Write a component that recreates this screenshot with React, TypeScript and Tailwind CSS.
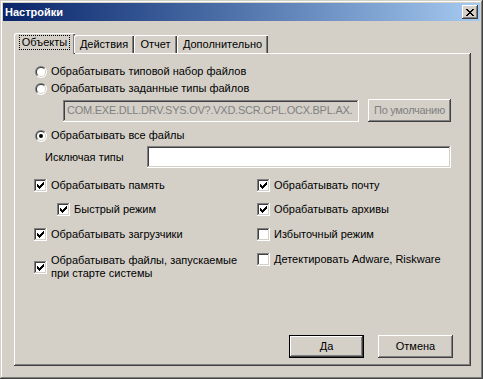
import React from "react";

const RAISED =
  "shadow-[inset_-1px_-1px_#404040,inset_1px_1px_#ffffff,inset_-2px_-2px_#808080,inset_2px_2px_#d4d0c8]";
const SUNKEN =
  "shadow-[inset_-1px_-1px_#ffffff,inset_1px_1px_#808080,inset_-2px_-2px_#d4d0c8,inset_2px_2px_#404040]";

function Check() {
  const px: [number, number][] = [
    [6, 0],
    [5, 1], [6, 1],
    [0, 2], [4, 2], [5, 2], [6, 2],
    [0, 3], [1, 3], [3, 3], [4, 3], [5, 3],
    [0, 4], [1, 4], [2, 4], [3, 4], [4, 4],
    [1, 5], [2, 5], [3, 5],
    [2, 6],
  ];
  return (
    <svg width="7" height="7" viewBox="0 0 7 7" shapeRendering="crispEdges">
      {px.map(([x, y], i) => (
        <rect key={i} x={x} y={y} width="1" height="1" fill="#000" />
      ))}
    </svg>
  );
}

function CheckBox({ checked }: { checked: boolean }) {
  return (
    <div className={`w-[13px] h-[13px] bg-white flex items-center justify-center shrink-0 ${SUNKEN}`}>
      {checked && <Check />}
    </div>
  );
}

function Radio({ checked }: { checked: boolean }) {
  return (
    <svg width="12" height="12" viewBox="0 0 12 12" className="shrink-0">
      <path d="M 1.757 10.243 A 6 6 0 0 1 10.243 1.757 Z" fill="#808080" />
      <path d="M 10.243 1.757 A 6 6 0 0 1 1.757 10.243 Z" fill="#ffffff" />
      <path d="M 2.464 9.536 A 5 5 0 0 1 9.536 2.464 Z" fill="#404040" />
      <path d="M 9.536 2.464 A 5 5 0 0 1 2.464 9.536 Z" fill="#d4d0c8" />
      <circle cx="6" cy="6" r="4" fill="#ffffff" />
      {checked && <circle cx="6" cy="6" r="2" fill="#000" />}
    </svg>
  );
}

function CheckRow({ checked, children }: { checked: boolean; children: React.ReactNode }) {
  return (
    <div className="flex items-center gap-[4px] h-[13px]">
      <CheckBox checked={checked} />
      <span className="leading-[13px] whitespace-nowrap">{children}</span>
    </div>
  );
}

function RadioRow({ checked, children }: { checked: boolean; children: React.ReactNode }) {
  return (
    <div className="flex items-center gap-[4px] h-[13px]">
      <Radio checked={checked} />
      <span className="leading-[13px] whitespace-nowrap">{children}</span>
    </div>
  );
}

export default function App() {
  return (
    <div
      className="w-[483px] h-[379px] bg-[#d4d0c8] p-[3px] flex flex-col text-[11px] text-black shadow-[inset_-1px_-1px_#404040,inset_1px_1px_#d4d0c8,inset_-2px_-2px_#808080,inset_2px_2px_#ffffff]"
      style={{ fontFamily: '"Liberation Sans", Arial, sans-serif' }}
    >
      {/* Title bar */}
      <div className="h-[18px] flex items-center justify-between bg-gradient-to-r from-[#0a246a] to-[#a6caf0] pl-[2px] pr-[2px]">
        <span className="text-white font-bold text-[11px] leading-[18px]">Настройки</span>
        <div className={`w-[16px] h-[14px] bg-[#d4d0c8] flex items-center justify-center ${RAISED}`}>
          <svg width="8" height="7" viewBox="0 0 8 7" shapeRendering="crispEdges">
            <path d="M0 0h2v1h-2zM6 0h2v1h-2zM1 1h2v1h-2zM5 1h2v1h-2zM2 2h4v1h-4zM3 3h2v1h-2zM2 4h4v1h-4zM1 5h2v1h-2zM5 5h2v1h-2zM0 6h2v1h-2zM6 6h2v1h-2z" fill="#000" />
          </svg>
        </div>
      </div>

      {/* Body */}
      <div className="flex flex-col pl-[11px] pt-[12px]">
        {/* Tabs */}
        <div className="flex items-end h-[20px] relative z-10">
          <div className="w-[61px] h-[21px] -mb-px bg-[#d4d0c8] rounded-tl-[2px] flex items-start justify-center pt-[3px] shadow-[inset_1px_1px_#ffffff,inset_-1px_0_#404040,inset_-2px_0_#808080]">
            <span className="outline outline-1 outline-dotted outline-black px-[2px] leading-[13px]">Объекты</span>
          </div>
          <div className="w-[60px] h-[18px] -ml-[1px] bg-[#d4d0c8] rounded-tl-[2px] flex items-center justify-center shadow-[inset_1px_1px_#ffffff,inset_-1px_0_#404040,inset_-2px_0_#808080]">
            Действия
          </div>
          <div className="w-[43px] h-[18px] bg-[#d4d0c8] rounded-tl-[2px] flex items-center justify-center shadow-[inset_1px_1px_#ffffff,inset_-1px_0_#404040,inset_-2px_0_#808080]">
            Отчет
          </div>
          <div className="w-[91px] h-[18px] bg-[#d4d0c8] rounded-tl-[2px] flex items-center justify-center shadow-[inset_1px_1px_#ffffff,inset_-1px_0_#404040,inset_-2px_0_#808080]">
            Дополнительно
          </div>
        </div>

        {/* Panel */}
        <div className="w-[457px] h-[313px] flex flex-col shadow-[inset_-1px_-1px_#404040,inset_1px_1px_#ffffff,inset_-2px_-2px_#808080]">
          <div className="flex flex-col pl-[21px] pt-[12px]">
            <RadioRow checked={false}>Обрабатывать типовой набор файлов</RadioRow>
            <div className="mt-[4px]">
              <RadioRow checked={false}>Обрабатывать заданные типы файлов</RadioRow>
            </div>
            <div className="flex items-center mt-[4px] ml-[28px] gap-[9px]">
              <div className={`w-[296px] h-[22px] bg-[#d4d0c8] text-[#808080] flex items-center pl-[4px] overflow-hidden whitespace-nowrap tracking-[-0.25px] ${SUNKEN}`}>
                COM.EXE.DLL.DRV.SYS.OV?.VXD.SCR.CPL.OCX.BPL.AX.
              </div>
              <div className={`w-[83px] h-[23px] flex items-center justify-center text-[#808080] tracking-[-0.3px] ${RAISED}`}>
                По умолчанию
              </div>
            </div>
            <div className="mt-[7px]">
              <RadioRow checked={true}>Обрабатывать все файлы</RadioRow>
            </div>
            <div className="flex items-center mt-[4px] ml-[10px]">
              <span className="w-[102px]">Исключая типы</span>
              <div className={`w-[304px] h-[22px] bg-white ${SUNKEN}`} />
            </div>
          </div>
          <div className="flex pt-[11px]">
            <div className="w-[243px] pl-[20px] flex flex-col">
              <CheckRow checked={true}>Обрабатывать память</CheckRow>
              <div className="mt-[11px] ml-[23px]">
                <CheckRow checked={true}>Быстрый режим</CheckRow>
              </div>
              <div className="mt-[12px]">
                <CheckRow checked={true}>Обрабатывать загрузчики</CheckRow>
              </div>
              <div className="mt-[13px] flex items-center gap-[4px]">
                <CheckBox checked={true} />
                <span className="leading-[13px]">
                  Обрабатывать файлы, запускаемые
                  <br />
                  при старте системы
                </span>
              </div>
            </div>
            <div className="flex flex-col">
              <CheckRow checked={true}>Обрабатывать почту</CheckRow>
              <div className="mt-[11px]">
                <CheckRow checked={true}>Обрабатывать архивы</CheckRow>
              </div>
              <div className="mt-[12px]">
                <CheckRow checked={false}>Избыточный режим</CheckRow>
              </div>
              <div className="mt-[12px]">
                <CheckRow checked={false}>Детектировать Adware, Riskware</CheckRow>
              </div>
            </div>
          </div>
          <div className="flex-1" />
          <div className="flex justify-end gap-[14px] pr-[18px] pb-[8px]">
            <div className="w-[75px] h-[23px] flex items-center justify-center shadow-[inset_0_0_0_1px_#000000,inset_-2px_-2px_#404040,inset_2px_2px_#ffffff,inset_-3px_-3px_#808080]">
              Да
            </div>
            <div className={`w-[75px] h-[23px] flex items-center justify-center ${RAISED}`}>Отмена</div>
          </div>
        </div>
      </div>
    </div>
  );
}
